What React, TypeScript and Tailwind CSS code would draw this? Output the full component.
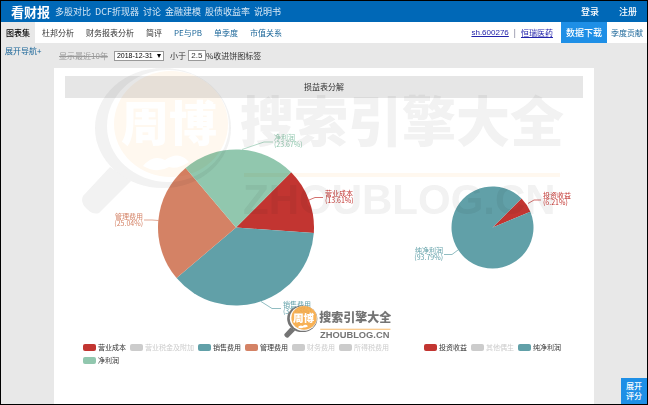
import React from 'react';

interface Slice {
  name: string;
  value: number;
  color: string;
  line: string;
  x: number;
  y: number;
  anchor: 'start' | 'end';
}

interface LegendEntry {
  name: string;
  swatch: string;
  off?: boolean;
}

const incomeSlices: Slice[] = [
  { name: '营业成本', value: 13.61, color: '#c23531', line: '309,200 315,197.5 323,197.5', x: 325, y: 196, anchor: 'start' },
  { name: '销售费用', value: 37.68, color: '#61a0a8', line: '261,301.5 272,308.5 281,308.5', x: 283, y: 307, anchor: 'start' },
  { name: '管理费用', value: 25.04, color: '#d48265', line: '158.5,220.5 152,220 144,220', x: 143, y: 219, anchor: 'end' },
  { name: '净利润', value: 23.67, color: '#91c7ae', line: '242,149.5 264,142 273,142', x: 274, y: 140, anchor: 'start' },
];

const profitSlices: Slice[] = [
  { name: '投资收益', value: 6.21, color: '#c23531', line: '528,203.5 534,200 541,200', x: 543, y: 198, anchor: 'start' },
  { name: '纯净利润', value: 93.79, color: '#61a0a8', line: '458,250 452,254.5 444,254.5', x: 443, y: 253, anchor: 'end' },
];

const incomeLegend: LegendEntry[] = [
  { name: '营业成本', swatch: 'bg-[#c23531]' },
  { name: '营业税金及附加', swatch: 'bg-[#cccccc]', off: true },
  { name: '销售费用', swatch: 'bg-[#61a0a8]' },
  { name: '管理费用', swatch: 'bg-[#d48265]' },
  { name: '财务费用', swatch: 'bg-[#cccccc]', off: true },
  { name: '所得税费用', swatch: 'bg-[#cccccc]', off: true },
  { name: '净利润', swatch: 'bg-[#91c7ae]' },
];

const profitLegend: LegendEntry[] = [
  { name: '投资收益', swatch: 'bg-[#c23531]' },
  { name: '其他偶生', swatch: 'bg-[#cccccc]', off: true },
  { name: '纯净利润', swatch: 'bg-[#61a0a8]' },
];

// Angles run clockwise from twelve o'clock
const wedge = (cx: number, cy: number, r: number, from: number, to: number) => {
  const point = (deg: number) => {
    const rad = (deg * Math.PI) / 180;
    return `${cx + r * Math.sin(rad)} ${cy - r * Math.cos(rad)}`;
  };
  return `M${cx} ${cy}L${point(from)}A${r} ${r} 0 ${to - from > 180 ? 1 : 0} 1 ${point(to)}Z`;
};

const Pie = ({ slices, cx, cy, r }: { slices: Slice[]; cx: number; cy: number; r: number }) => {
  let angle = 45;
  return (
    <g>
      {slices.map((slice) => {
        const from = angle;
        angle += slice.value * 3.6;
        return (
          <g key={slice.name} fill={slice.color}>
            <path d={wedge(cx, cy, r, from, angle)} />
            <polyline points={slice.line} fill="none" stroke={slice.color} strokeWidth="0.7" />
            <text x={slice.x} y={slice.y} textAnchor={slice.anchor} fontSize="7">
              {slice.name}
            </text>
            <text x={slice.x} y={slice.y + 7} textAnchor={slice.anchor} fontSize="7">
              {`(${slice.value}%)`}
            </text>
          </g>
        );
      })}
    </g>
  );
};

const Legend = ({ entries }: { entries: LegendEntry[] }) => (
  <div className="flex flex-wrap content-start gap-x-1 gap-y-[5px]">
    {entries.map((entry) => (
      <button key={entry.name} type="button" className="flex items-center gap-[2px]">
        <span className={`h-[7px] w-[13px] rounded-[2px] ${entry.swatch}`} />
        <span className={entry.off ? 'text-[7px] leading-[8px] text-[#cccccc]' : 'text-[7px] leading-[8px] text-[#333333]'}>
          {entry.name}
        </span>
      </button>
    ))}
  </div>
);

const Logo = ({ className }: { className: string }) => (
  <svg viewBox="0 0 486 160" className={className}>
    <path d="M29 101 L2 130 Q-1 137 6 143 Q12 149 18 147 L50 115 Z" fill="#666666" />
    <ellipse cx="82" cy="62" rx="68" ry="60" fill="#666666" />
    <ellipse cx="87" cy="60" rx="61" ry="56" fill="#ffffff" />
    <ellipse cx="90" cy="58" rx="57" ry="53" fill="#f7a944" />
    <path d="M62 100 Q72 88 84 94 Q98 84 108 96 Q96 104 88 101 Q76 108 62 100 Z" fill="#ffffff" />
    <text x="40" y="75" fontSize="48" fontWeight="900" fill="#ffffff">周博</text>
    <text x="159" y="76" fontSize="54" fontWeight="900" fill="#666666">搜索引擎大全</text>
    <rect x="163" y="107" width="316" height="4" fill="#f7a944" />
    <text x="162" y="148" fontSize="42" fontWeight="700" fill="#666666" fontFamily="Liberation Sans, sans-serif">
      ZHOUBLOG.CN
    </text>
  </svg>
);

const TopBar = () => (
  <header className="flex h-[21px] items-center bg-[#0068b7] pr-[10px] pl-[10px] text-white">
    <a href="#home" className="text-[13px] leading-4 font-bold">看财报</a>
    <nav className="ml-[5px] flex gap-1 text-[9px] leading-3 text-[#d5e7f5]">
      <a href="#compare">多股对比</a>
      <a href="#dcf">DCF折现器</a>
      <a href="#discuss">讨论</a>
      <a href="#model">金融建模</a>
      <a href="#yield">股债收益率</a>
      <a href="#manual">说明书</a>
    </nav>
    <div className="ml-auto flex gap-5 text-[9px] leading-3 font-medium">
      <a href="#login">登录</a>
      <a href="#register">注册</a>
    </div>
  </header>
);

const TabBar = () => (
  <div className="flex h-[21px] items-stretch bg-white text-[8px] leading-3 text-[#333333]">
    <nav className="flex items-center gap-3">
      <a href="#charts" className="-mr-[5px] flex items-center self-stretch bg-[#e8e8e8] px-[5px] font-medium text-black">图表集</a>
      <a href="#dupont">杜邦分析</a>
      <a href="#report">财务报表分析</a>
      <a href="#brief">简评</a>
      <a href="#pe" className="text-[#1b6699]">PE与PB</a>
      <a href="#quarter" className="text-[#1b6699]">单季度</a>
      <a href="#value" className="text-[#1b6699]">市值关系</a>
    </nav>
    <div className="ml-auto flex items-center gap-[5px] text-[#2222aa]">
      <a href="#code" className="font-['Liberation_Sans',sans-serif] underline">sh.600276</a>
      <span className="text-[#555577]">|</span>
      <a href="#company" className="underline">恒瑞医药</a>
    </div>
    <button type="button" className="ml-2 bg-[#1e8fe6] px-[5px] text-[9px] font-medium text-white">数据下载</button>
    <a href="#contribution" className="flex items-center px-1 text-[#1b6699]">季度贡献</a>
  </div>
);

const Toolbar = () => (
  <div className="flex h-[25px] items-center gap-[6px] pl-[5px] text-[8px] leading-3 text-[#333333]">
    <button type="button" className="text-[#999999] line-through">显示最近10年</button>
    <div className="relative flex">
      <select
        aria-label="报告期"
        defaultValue="2018-12-31"
        className="h-[10px] w-[50px] appearance-none border border-[#999999] bg-white pl-[2px] font-['Liberation_Sans',sans-serif] text-[7px] leading-[8px] text-black"
      >
        <option>2018-12-31</option>
      </select>
      <svg viewBox="0 0 4 4" className="pointer-events-none absolute top-[3px] right-[3px] h-1 w-1">
        <path d="M0 0H4L2 4Z" fill="#000000" />
      </svg>
    </div>
    <label className="flex items-center">
      小于
      <input
        type="text"
        defaultValue="2.5"
        className="ml-[2px] h-[11px] w-[18px] border border-[#999999] bg-white text-center font-['Liberation_Sans',sans-serif] text-[8px] leading-[9px]"
      />
      %收进饼图标签
    </label>
  </div>
);

export default function App() {
  return (
    <div
      lang="zh-CN"
      className="flex min-h-screen flex-col border border-black bg-[#e8e8e8] font-['Noto_Sans_CJK_SC',sans-serif]"
    >
      <TopBar />
      <TabBar />
      <div className="flex flex-1">
        <aside className="w-[53px] shrink-0 pt-[2px] pl-1">
          <button type="button" className="block text-[8px] leading-3 text-[#1b6699]">展开导航+</button>
        </aside>
        <main className="mr-[53px] flex flex-1 flex-col">
          <Toolbar />
          <section className="relative flex-1 bg-white px-[11px] pt-2">
            <h1 className="h-[22px] bg-[#e6e6e6] text-center text-[8px] leading-[22px] text-[#333333]">损益表分解</h1>
            <svg viewBox="65 98 518 244" className="block w-full">
              <Pie slices={incomeSlices} cx={236} cy={227.5} r={78} />
              <Pie slices={profitSlices} cx={492.5} cy={227.5} r={41} />
            </svg>
            <div className="grid grid-cols-[15fr_7fr] pt-[1px] pl-[18px]">
              <Legend entries={incomeLegend} />
              <Legend entries={profitLegend} />
            </div>
            <Logo className="pointer-events-none absolute -top-[2px] left-[5%] w-[90%] opacity-[0.09] mix-blend-multiply" />
            <Logo className="pointer-events-none absolute top-[237px] left-[42.5%] w-[20%] opacity-90" />
          </section>
        </main>
      </div>
      <button
        type="button"
        className="fixed right-[1px] bottom-[1px] w-[26px] bg-[#1e8fe6] px-[5px] py-[3px] text-[8px] leading-[10px] font-medium text-white"
      >
        展开评分
      </button>
    </div>
  );
}
